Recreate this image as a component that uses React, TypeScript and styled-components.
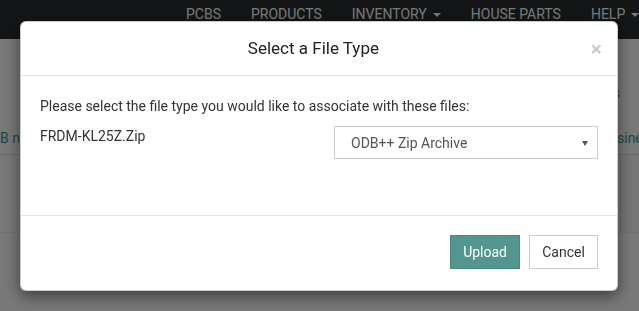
import React from 'react';
import styled, { createGlobalStyle } from 'styled-components';

const GlobalStyle = createGlobalStyle`
  html, body {
    margin: 0;
    padding: 0;
    height: 100%;
    overflow: hidden;
  }
  body {
    font-family: Roboto, "Helvetica Neue", Arial, sans-serif;
    font-size: 14px;
    line-height: 20px;
    color: #333;
    background: #f1f1f1;
  }
  * {
    box-sizing: border-box;
  }
`;

const Page = styled.div`
  height: 311px;
  background: #f1f1f1;
`;

const Navbar = styled.nav`
  height: 39px;
  background: #262b2d;
  overflow: hidden;
`;

const NavList = styled.ul`
  list-style: none;
  display: flex;
  margin: 0;
  padding: 0 0 0 171px;
`;

const NavItem = styled.li`
  padding: 8px 15px 0;
  font-size: 14px;
  line-height: 12px;
  color: #f0f3f5;
  text-transform: uppercase;
  white-space: nowrap;
  display: flex;
  align-items: flex-start;
  gap: 6px;
`;

const Caret = styled.span`
  display: inline-block;
  margin-top: 5px;
  border-left: 4px solid transparent;
  border-right: 4px solid transparent;
  border-top: 4px solid #f0f3f5;
`;

const HeaderRow = styled.div`
  height: 116px;
  display: flex;
  flex-direction: column;
  justify-content: space-between;
  padding: 44px 0 6px;
  border-bottom: 1px solid #d2d2d2;
`;

const HeaderLink = styled.span`
  align-self: flex-end;
  color: #3f8c8c;
  margin-right: 19px;
`;

const TableText = styled.div`
  display: flex;
  justify-content: space-between;
  color: #3f8c8c;
  white-space: nowrap;
`;

const Cell = styled.span<{ $width: number }>`
  width: ${(p) => p.$width}px;
  overflow: hidden;
`;

const BandRow = styled.div`
  height: 78px;
  display: flex;
  justify-content: flex-end;
  border-bottom: 1px solid #e4e4e4;
`;

const BandCell = styled.div`
  width: 19px;
  border-left: 1px solid #d8d8d8;
  background: #ececec;
`;

const Backdrop = styled.div`
  position: fixed;
  inset: 0;
  background: rgba(0, 0, 0, 0.5);
`;

const ModalWrap = styled.div`
  position: fixed;
  inset: 0;
  padding: 21px 0 0 20px;
`;

const Dialog = styled.div`
  width: 598px;
  height: 270px;
  background: #fff;
  border: 1px solid rgba(0, 0, 0, 0.2);
  border-radius: 6px;
  box-shadow: 0 5px 15px rgba(0, 0, 0, 0.5);
  display: flex;
  flex-direction: column;
`;

const Header = styled.div`
  display: flex;
  align-items: flex-start;
  padding: 15px 15px;
  border-bottom: 1px solid #e5e5e5;
`;

const Title = styled.h4`
  flex: 1;
  margin: 0;
  text-align: center;
  font-size: 17px;
  font-weight: 400;
  line-height: 23px;
  color: #222;
`;

const Close = styled.button`
  border: 0;
  background: transparent;
  padding: 0;
  margin-top: 2px;
  font-family: Roboto, Arial, sans-serif;
  font-size: 21px;
  font-weight: 700;
  line-height: 1;
  color: #000;
  opacity: 0.2;
  cursor: pointer;
`;

const Body = styled.div`
  padding: 20px 19px;
  min-height: 140px;
  border-bottom: 1px solid #e5e5e5;
`;

const Lead = styled.p`
  margin: 0 0 10px;
  color: #333;
`;

const FormRow = styled.div`
  display: grid;
  grid-template-columns: 1fr 1fr;
  column-gap: 30px;
`;

const FileName = styled.div`
  color: #333;
`;

const Select = styled.div`
  position: relative;
  height: 33px;
  border: 1px solid #ccc;
  padding: 6px 16px;
  color: #555;
`;

const SelectArrow = styled.span`
  position: absolute;
  right: 9px;
  top: 14px;
  border-left: 3px solid transparent;
  border-right: 3px solid transparent;
  border-top: 5px solid #555;
`;

const Footer = styled.div`
  display: flex;
  justify-content: flex-end;
  gap: 9px;
  padding: 19px 19px 20px;
`;

const Button = styled.button<{ $primary?: boolean }>`
  font-family: Roboto, Arial, sans-serif;
  font-size: 14px;
  line-height: 20px;
  padding: 6px 12px;
  height: 34px;
  min-width: 69px;
  border: 1px solid ${(p) => (p.$primary ? '#4a8780' : '#ccc')};
  background: ${(p) => (p.$primary ? '#52968f' : '#fff')};
  color: ${(p) => (p.$primary ? '#fff' : '#333')};
  cursor: pointer;
`;

const App = () => {
  return (
    <>
      <GlobalStyle />
      <Page>
        <Navbar>
          <NavList>
            <NavItem>PCBs</NavItem>
            <NavItem>Products</NavItem>
            <NavItem>
              Inventory <Caret />
            </NavItem>
            <NavItem>House Parts</NavItem>
            <NavItem>
              Help <Caret />
            </NavItem>
          </NavList>
        </Navbar>
        <HeaderRow>
          <HeaderLink>s</HeaderLink>
          <TableText>
            <Cell $width={20}>B n</Cell>
            <Cell $width={22}>sines</Cell>
          </TableText>
        </HeaderRow>
        <BandRow>
          <BandCell />
        </BandRow>
      </Page>
      <Backdrop />
      <ModalWrap>
        <Dialog>
          <Header>
            <Title>Select a File Type</Title>
            <Close aria-label="Close">×</Close>
          </Header>
          <Body>
            <Lead>Please select the file type you would like to associate with these files:</Lead>
            <FormRow>
              <FileName>FRDM-KL25Z.Zip</FileName>
              <Select>
                ODB++ Zip Archive
                <SelectArrow />
              </Select>
            </FormRow>
          </Body>
          <Footer>
            <Button $primary>Upload</Button>
            <Button>Cancel</Button>
          </Footer>
        </Dialog>
      </ModalWrap>
    </>
  );
};

export default App;
